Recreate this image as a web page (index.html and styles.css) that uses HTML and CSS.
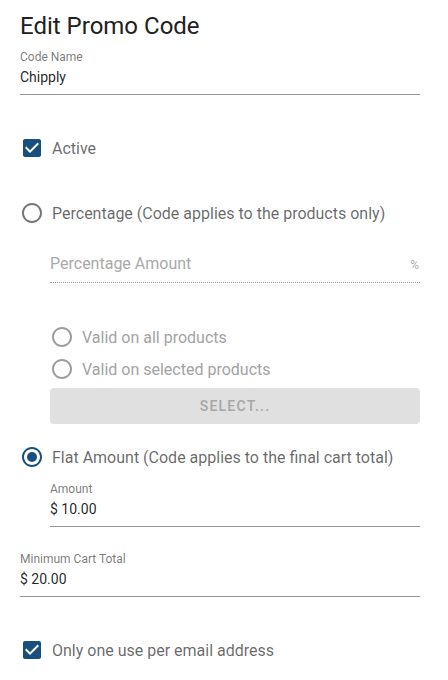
FILE: index.html
```html
<!DOCTYPE html>
<html lang="en">
<head>
    <meta charset="UTF-8">
    <meta name="viewport" content="width=device-width, initial-scale=1.0">
    <title>Edit Promo Code</title>
    <link rel="stylesheet" href="styles.css">
</head>
<body>
    <main class="promo-form">
        <h1>Edit Promo Code</h1>

        <div class="field field-name">
            <label class="field-label">Code Name</label>
            <div class="field-value">Chipply</div>
        </div>

        <div class="check-row row-active">
            <svg class="icon checked" viewBox="0 0 24 24"><path d="M19 3H5c-1.11 0-2 .9-2 2v14c0 1.1.89 2 2 2h14c1.11 0 2-.9 2-2V5c0-1.1-.89-2-2-2zm-9 14l-5-5 1.41-1.41L10 14.17l7.59-7.59L19 8l-9 9z"/></svg>
            <span class="check-label">Active</span>
        </div>

        <div class="check-row row-percent">
            <svg class="icon" viewBox="0 0 24 24"><path d="M12 2C6.48 2 2 6.48 2 12s4.48 10 10 10 10-4.48 10-10S17.52 2 12 2zm0 18c-4.42 0-8-3.58-8-8s3.58-8 8-8 8 3.58 8 8-3.58 8-8 8z"/></svg>
            <span class="check-label">Percentage (Code applies to the products only)</span>
        </div>

        <div class="indent">
            <div class="field field-disabled">
                <div class="field-value">
                    <span class="placeholder">Percentage Amount</span>
                    <span class="suffix">%</span>
                </div>
            </div>

            <div class="sub-options">
                <div class="check-row small disabled">
                    <svg class="icon" viewBox="0 0 24 24"><path d="M12 2C6.48 2 2 6.48 2 12s4.48 10 10 10 10-4.48 10-10S17.52 2 12 2zm0 18c-4.42 0-8-3.58-8-8s3.58-8 8-8 8 3.58 8 8-3.58 8-8 8z"/></svg>
                    <span class="check-label">Valid on all products</span>
                </div>
                <div class="check-row small disabled">
                    <svg class="icon" viewBox="0 0 24 24"><path d="M12 2C6.48 2 2 6.48 2 12s4.48 10 10 10 10-4.48 10-10S17.52 2 12 2zm0 18c-4.42 0-8-3.58-8-8s3.58-8 8-8 8 3.58 8 8-3.58 8-8 8z"/></svg>
                    <span class="check-label">Valid on selected products</span>
                </div>
                <button class="btn-select" disabled>Select...</button>
            </div>
        </div>

        <div class="check-row row-flat">
            <svg class="icon checked" viewBox="0 0 24 24"><path d="M12 2C6.48 2 2 6.48 2 12s4.48 10 10 10 10-4.48 10-10S17.52 2 12 2zm0 18c-4.42 0-8-3.58-8-8s3.58-8 8-8 8 3.58 8 8-3.58 8-8 8z"/><circle cx="12" cy="12" r="5"/></svg>
            <span class="check-label">Flat Amount (Code applies to the final cart total)</span>
        </div>

        <div class="indent">
            <div class="field field-amount">
                <label class="field-label">Amount</label>
                <div class="field-value">$ 10.00</div>
            </div>
        </div>

        <div class="field field-min">
            <label class="field-label">Minimum Cart Total</label>
            <div class="field-value">$ 20.00</div>
        </div>

        <div class="check-row row-email">
            <svg class="icon checked" viewBox="0 0 24 24"><path d="M19 3H5c-1.11 0-2 .9-2 2v14c0 1.1.89 2 2 2h14c1.11 0 2-.9 2-2V5c0-1.1-.89-2-2-2zm-9 14l-5-5 1.41-1.41L10 14.17l7.59-7.59L19 8l-9 9z"/></svg>
            <span class="check-label">Only one use per email address</span>
        </div>
    </main>
</body>
</html>
```

FILE: styles.css
```css
body {
    margin: 0;
    padding: 0;
    background: #fff;
    font-family: Roboto, "Liberation Sans", sans-serif;
    color: rgba(0,0,0,0.87);
}
.promo-form {
    width: 400px;
    margin-left: 20px;
    padding-top: 10px;
}
h1 {
    margin: 0;
    font-size: 24px;
    font-weight: 400;
    line-height: 32px;
    color: #212121;
}

/* text fields */
.field {
    display: flex;
    flex-direction: column;
}
.field-label {
    font-size: 12px;
    line-height: 16px;
    color: rgba(0,0,0,0.54);
    margin-bottom: 2px;
}
.field-value {
    display: flex;
    align-items: baseline;
    font-size: 14px;
    line-height: 20px;
    padding-bottom: 7px;
    border-bottom: 1px solid #949494;
}
.field-name {
    margin-top: 7px;
}
.field-disabled {
    margin-top: 20px;
}
.field-disabled .field-value {
    font-size: 16px;
    border-bottom: 1px dotted #9a9a9a;
}
.placeholder {
    flex: 1;
    color: #a9a9a9;
}
.suffix {
    font-size: 12px;
    color: #b0b0b0;
    margin-right: 1px;
}
.field-amount {
    margin-top: 3px;
}
.field-min {
    margin-top: 24px;
}

/* checkboxes and radios */
.check-row {
    display: flex;
    align-items: center;
    gap: 8px;
    height: 42px;
}
.check-row.small {
    height: 32px;
}
.icon {
    width: 24px;
    height: 24px;
    flex-shrink: 0;
    fill: #757575;
}
.icon.checked {
    fill: #17507f;
}
.check-label {
    font-size: 16px;
    color: rgba(0,0,0,0.6);
}
.disabled .icon {
    fill: #9c9c9c;
}
.disabled .check-label {
    color: #a3a3a3;
}
.row-active {
    margin-top: 32px;
}
.row-percent {
    margin-top: 23px;
}
.row-flat {
    margin-top: 12px;
}
.row-email {
    margin-top: 32px;
}

.indent {
    margin-left: 30px;
}
.sub-options {
    margin-top: 38px;
}
.btn-select {
    display: block;
    width: 100%;
    height: 36px;
    margin-top: 3px;
    border: none;
    border-radius: 4px;
    background: #e0e0e0;
    color: #a6a6a6;
    font-family: Roboto, "Liberation Sans", sans-serif;
    font-size: 14px;
    font-weight: 500;
    letter-spacing: 1.25px;
    text-transform: uppercase;
}
```
